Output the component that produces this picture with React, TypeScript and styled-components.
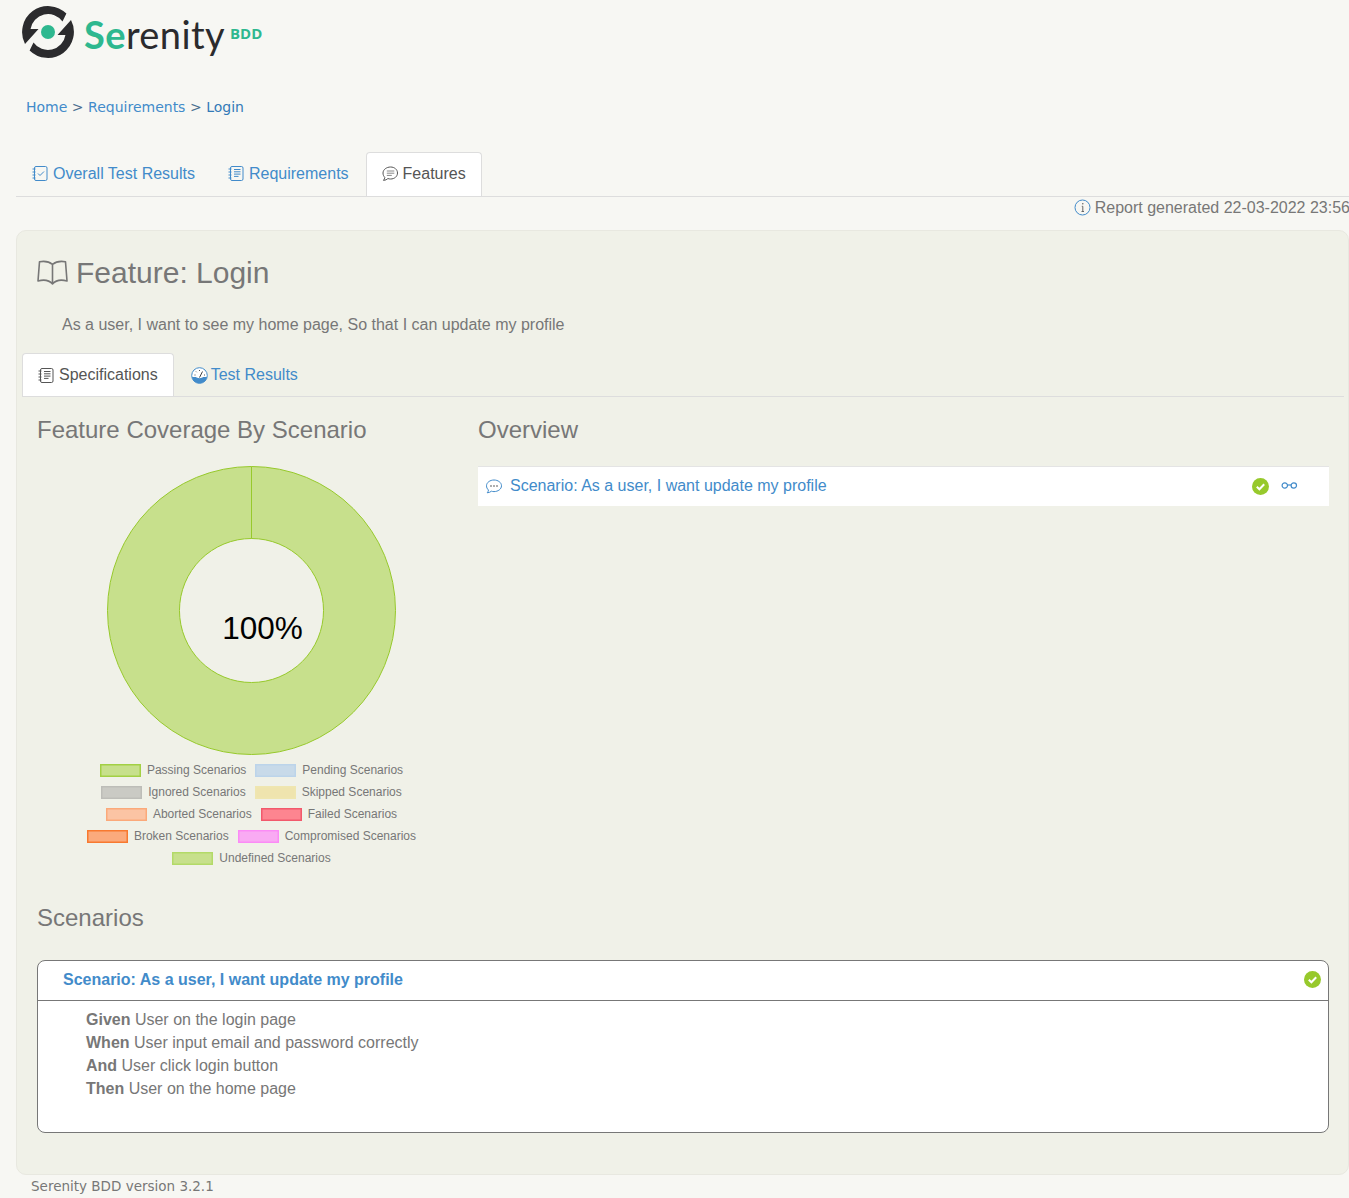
import React from "react";
import styled, { createGlobalStyle } from "styled-components";

const BLUE = "#428bca";
const GREY = "#777";

const GlobalStyle = createGlobalStyle`
  html, body {
    margin: 0;
    padding: 0;
    background: #f7f7f3;
    font-family: "Liberation Sans", Arial, sans-serif;
    font-size: 16px;
    color: ${GREY};
  }
  * { box-sizing: border-box; }
`;

const Page = styled.div`
  width: 1349px;
  height: 1198px;
  overflow: hidden;
`;

const Header = styled.header`
  display: flex;
  align-items: flex-start;
  height: 70px;
  padding: 6px 0 0 22px;
`;

const LogoName = styled.span`
  margin: 7px 0 0 10px;
  font-family: Lato, sans-serif;
  font-size: 38px;
  line-height: 42px;
  letter-spacing: 0.4px;
  color: #2b2b2d;
  b {
    font-weight: 700;
    color: #2eb88f;
  }
`;

const LogoTag = styled.span`
  margin: 18px 0 0 5px;
  font-family: "Open Sans", sans-serif;
  font-weight: 700;
  font-size: 15px;
  line-height: 18px;
  color: #2eb88f;
`;

const Breadcrumbs = styled.nav`
  display: flex;
  gap: 4.5px;
  height: 82px;
  padding: 28px 0 0 26px;
  font-family: "DejaVu Sans", Verdana, sans-serif;
  font-size: 14px;
  line-height: 18px;
  color: #4a6f8f;
`;

const Crumb = styled.a<{ $current?: boolean }>`
  color: ${(p) => (p.$current ? "#337ab7" : BLUE)};
`;

const TabBar = styled.ul<{ $inner?: boolean }>`
  display: flex;
  list-style: none;
  height: ${(p) => (p.$inner ? 44 : 45)}px;
  margin: 0 0 0 ${(p) => (p.$inner ? 0 : 16)}px;
  padding: 0;
  border-bottom: 1px solid #ddd;
`;

const Tab = styled.li<{ $active?: boolean; $gap?: number; $lift?: number }>`
  display: flex;
  align-items: center;
  gap: ${(p) => p.$gap ?? 5}px;
  height: 100%;
  margin-right: 1px;
  padding: 0 15px ${(p) => p.$lift ?? 2}px;
  border: 1px solid ${(p) => (p.$active ? "#ddd" : "transparent")};
  border-bottom: 0;
  border-radius: 4px 4px 0 0;
  background: ${(p) => (p.$active ? "#fff" : "transparent")};
  color: ${(p) => (p.$active ? "#555" : BLUE)};
  font-size: 16px;
  svg {
    flex: none;
  }
`;

const GeneratedLine = styled.div`
  display: flex;
  justify-content: flex-end;
  align-items: center;
  gap: 4px;
  height: 33px;
  margin-right: -1px;
  padding-bottom: 12px;
  white-space: nowrap;
  color: ${GREY};
`;

const Panel = styled.main`
  height: 945px;
  margin-left: 16px;
  padding: 0 4px 0 5px;
  background: #f0f1e8;
  border: 1px solid #e8e8e0;
  border-radius: 10px;
`;

const FeatureTitle = styled.h1`
  display: flex;
  align-items: center;
  gap: 8px;
  height: 41px;
  margin: 21px 0 0 15px;
  font-size: 30px;
  font-weight: 400;
  color: ${GREY};
`;

const Narrative = styled.p`
  height: 20px;
  margin: 22px 0 18px 40px;
  line-height: 20px;
`;

const Columns = styled.section`
  display: grid;
  grid-template-columns: 429px 851px;
  column-gap: 12px;
  padding: 0 0 0 15px;
  height: 500px;
`;

const SectionTitle = styled.h2`
  height: 28px;
  margin: 19px 0 21px;
  font-size: 24px;
  line-height: 28px;
  font-weight: 400;
  color: ${GREY};
`;

const OverviewTitle = styled(SectionTitle)`
  margin-bottom: 22px;
`;

const ScenariosTitle = styled(SectionTitle)`
  margin: 7px 0 28px 15px;
`;

const ChartWrap = styled.div`
  display: flex;
  justify-content: center;
  height: 294px;
`;

const Legend = styled.div`
  display: flex;
  flex-direction: column;
  align-items: center;
`;

const LegendRow = styled.div`
  display: flex;
  gap: 9px;
  height: 22px;
  align-items: center;
`;

const LegendItem = styled.span`
  display: flex;
  align-items: center;
  gap: 6px;
  font-size: 12px;
  white-space: nowrap;
`;

const Swatch = styled.i<{ $fill: string; $line: string }>`
  display: block;
  width: 41px;
  height: 13px;
  background: ${(p) => p.$fill};
  border: 1px solid ${(p) => p.$line};
  box-shadow: inset 0 0 0 0.5px ${(p) => p.$line};
`;

const OverviewRow = styled.div`
  display: flex;
  align-items: center;
  height: 40px;
  padding: 0 31px 1px 8px;
  background: #fff;
  border-top: 1px solid #e4e4e4;
  color: ${BLUE};
`;

const OverviewName = styled.span`
  flex: 1;
  margin-left: 8px;
`;

const GlassesSlot = styled.span`
  display: flex;
  margin: -1px 0 0 12px;
`;

const ScenarioCard = styled.article`
  margin: 0 15px;
  height: 173px;
  background: #fff;
  border: 1px solid ${GREY};
  border-radius: 8px;
`;

const ScenarioHead = styled.div`
  display: flex;
  justify-content: space-between;
  align-items: center;
  height: 40px;
  padding: 0 7px 2px 25px;
  border-bottom: 1px solid ${GREY};
  font-weight: 700;
  color: ${BLUE};
`;

const Steps = styled.div`
  padding: 7px 0 0 48px;
  font-size: 16px;
  line-height: 23px;
`;

const Footer = styled.footer`
  padding: 3px 0 0 31px;
  font-family: "DejaVu Sans", Verdana, sans-serif;
  font-size: 13.5px;
  line-height: 16px;
  color: ${GREY};
`;

const legendRows = [
  [
    ["Passing Scenarios", "#c7e08c", "#a3d044"],
    ["Pending Scenarios", "#c8dae9", "#bcd4ea"],
  ],
  [
    ["Ignored Scenarios", "#cacac4", "#bdbdb8"],
    ["Skipped Scenarios", "#efe4ae", "#efe6b0"],
  ],
  [
    ["Aborted Scenarios", "#fbc4a4", "#fba97a"],
    ["Failed Scenarios", "#fd8590", "#f2596c"],
  ],
  [
    ["Broken Scenarios", "#fbaa7c", "#f8792f"],
    ["Compromised Scenarios", "#f9aaf3", "#fb8bf6"],
  ],
  [["Undefined Scenarios", "#c7e08c", "#b3da68"]],
];

const NotebookIcon = ({ color, check }: { color: string; check?: boolean }) => (
  <svg width="16" height="17" viewBox="0 0 16 17" fill="none" stroke={color} strokeWidth="1">
    <rect x="2.5" y="1.5" width="12.5" height="14" rx="1.5" />
    <path d="M0.5 4h3M0.5 7h3M0.5 10h3M0.5 13h3" strokeDasharray="2 0.5" />
    {check ? (
      <path d="M6 8.5l2 2 4-4" />
    ) : (
      <path d="M6 4.5h6.5M6 6.8h6.5M6 9.1h6.5M6 11.4h4.5" />
    )}
  </svg>
);

const ChatLinesIcon = () => (
  <svg width="16" height="16" viewBox="0 0 16 16" fill="none" stroke="#555" strokeWidth="1">
    <path d="M8.6 1c3.900 0 6.900 2.600 6.900 6s-3 6-6.900 6c-1 0-1.900-.1-2.700-.5-1 1-2.400 1.700-4.400 1.900.7-.9 1.200-2 1.300-3.100C1.600 10.200 1 8.700 1 7c0-3.400 3.600-6 7.600-6z" />
    <path d="M4.800 5h7.500M4.800 7.200h7.500M4.800 9.400h5" stroke="#888" />
  </svg>
);

const ChatDotsIcon = () => (
  <svg width="16" height="15" viewBox="0 0 16 15" fill="none" stroke={BLUE} strokeWidth="1">
    <path d="M8 1c4 0 7.500 2.500 7.500 5.800S12 12.600 8 12.600c-.9 0-1.800-.1-2.600-.4-1 .9-2.500 1.500-4.200 1.600.7-.8 1.200-1.800 1.300-2.800C1.200 9.900.5 8.400.5 6.800.5 3.500 4 1 8 1z" />
    <path d="M4.300 7h1.400M7.300 7h1.400M10.300 7h1.400" strokeWidth="1.400" stroke="#666" />
  </svg>
);

const InfoIcon = () => (
  <svg width="17" height="17" viewBox="0 0 17 17" fill="none" stroke={BLUE}>
    <circle cx="8.500" cy="8.500" r="7.500" />
    <path d="M8.800 7.300v5M7.500 12.500h2.500M7.800 7.300h1" stroke="#666" />
    <circle cx="8.800" cy="4.800" r="0.800" fill="#666" stroke="none" />
  </svg>
);

const BookIcon = () => (
  <svg width="31" height="26" viewBox="0 0 31 26" fill="none" stroke={GREY} strokeWidth="1.600" strokeLinejoin="round">
    <path d="M15.500 4.500C12 1.500 6.500 1 2.500 1.800L1 21c5.500-1.500 11-1 14.500 3 3.500-4 9-4.500 14.500-3L28.500 1.800C24.500 1 19 1.500 15.500 4.500V24" />
  </svg>
);

const GaugeIcon = () => (
  <svg width="17" height="17" viewBox="0 0 17 17">
    <circle cx="8.500" cy="8.500" r="7.800" fill="#fff" stroke={BLUE} />
    <path d="M1 10h4c1 1.500 6 1.500 7 0h4c-.5 3.800-3.500 6.300-7.500 6.300S1.500 13.800 1 10z" fill={BLUE} />
    <path d="M8.500 10.500l3-6" stroke="#444" fill="none" />
    <path d="M3.500 8h1M5 4.500l.7.7M8.500 3v1M13 8h1" stroke="#555" fill="none" />
  </svg>
);

const GlassesIcon = () => (
  <svg width="17" height="9" viewBox="0 0 17 9" fill="none" stroke={BLUE} strokeWidth="1.200">
    <circle cx="3.800" cy="4.500" r="2.700" />
    <circle cx="12.800" cy="4.500" r="2.700" />
    <path d="M6.500 4h3.600" />
  </svg>
);

const CheckBadge = () => (
  <svg width="17" height="17" viewBox="0 0 17 17">
    <circle cx="8.500" cy="8.500" r="8.500" fill="#97c92c" />
    <path d="M4.800 8.800l2.600 2.500 4.800-5" fill="none" stroke="#fff" strokeWidth="2" />
  </svg>
);

const LogoPiece = "M3 38L16.500 23H8.560A17.700 17.700 0 0 1 40.500 15.500L44.400 7.600A26 26 0 0 0 3 38Z";

const LogoMark = () => (
  <svg width="52" height="52" viewBox="0 0 52 52">
    <path d={LogoPiece} fill="#2b2b2d" />
    <path d={LogoPiece} fill="#2b2b2d" transform="rotate(180 26 26)" />
    <circle cx="26" cy="26" r="7" fill="#2eb88f" />
  </svg>
);

const Donut = () => (
  <svg width="290" height="294" viewBox="0 0 290 294">
    <path
      fillRule="evenodd"
      d="M144.500 1.500a144 144 0 1 0 0 288a144 144 0 1 0 0-288zM144.500 73.500a72 72 0 1 1 0 144a72 72 0 1 1 0-144z"
      fill="#c7e08c"
      stroke="#97c92c"
    />
    <path d="M144.500 1.500v72" stroke="#97c92c" />
    <text x="155.500" y="174" textAnchor="middle" fontFamily="Liberation Sans, sans-serif" fontSize="31.500" fill="#000">
      100%
    </text>
  </svg>
);

const App = () => {
  return (
    <Page>
      <GlobalStyle />
      <Header>
        <LogoMark />
        <LogoName>
          <b>Se</b>renity
        </LogoName>
        <LogoTag>BDD</LogoTag>
      </Header>
      <Breadcrumbs>
        <Crumb>Home</Crumb>
        <span>&gt;</span>
        <Crumb>Requirements</Crumb>
        <span>&gt;</span>
        <Crumb $current>Login</Crumb>
      </Breadcrumbs>
      <TabBar>
        <Tab>
          <NotebookIcon color={BLUE} check />
          Overall Test Results
        </Tab>
        <Tab>
          <NotebookIcon color={BLUE} />
          Requirements
        </Tab>
        <Tab $active>
          <ChatLinesIcon />
          Features
        </Tab>
      </TabBar>
      <GeneratedLine>
        <InfoIcon />
        Report generated 22-03-2022 23:56
      </GeneratedLine>
      <Panel>
        <FeatureTitle>
          <BookIcon />
          Feature: Login
        </FeatureTitle>
        <Narrative>As a user, I want to see my home page, So that I can update my profile</Narrative>
        <TabBar $inner>
          <Tab $active $lift={0}>
            <NotebookIcon color="#555" />
            Specifications
          </Tab>
          <Tab $gap={3} $lift={0}>
            <GaugeIcon />
            Test Results
          </Tab>
        </TabBar>
        <Columns>
          <div>
            <SectionTitle>Feature Coverage By Scenario</SectionTitle>
            <ChartWrap>
              <Donut />
            </ChartWrap>
            <Legend>
              {legendRows.map((row) => (
                <LegendRow key={row[0][0]}>
                  {row.map(([label, fill, line]) => (
                    <LegendItem key={label}>
                      <Swatch $fill={fill} $line={line} />
                      {label}
                    </LegendItem>
                  ))}
                </LegendRow>
              ))}
            </Legend>
          </div>
          <div>
            <OverviewTitle>Overview</OverviewTitle>
            <OverviewRow>
              <ChatDotsIcon />
              <OverviewName>Scenario: As a user, I want update my profile</OverviewName>
              <CheckBadge />
              <GlassesSlot>
                <GlassesIcon />
              </GlassesSlot>
            </OverviewRow>
          </div>
        </Columns>
        <ScenariosTitle>Scenarios</ScenariosTitle>
        <ScenarioCard>
          <ScenarioHead>
            Scenario: As a user, I want update my profile
            <CheckBadge />
          </ScenarioHead>
          <Steps>
            <div>
              <b>Given</b> User on the login page
            </div>
            <div>
              <b>When</b> User input email and password correctly
            </div>
            <div>
              <b>And</b> User click login button
            </div>
            <div>
              <b>Then</b> User on the home page
            </div>
          </Steps>
        </ScenarioCard>
      </Panel>
      <Footer>Serenity BDD version 3.2.1</Footer>
    </Page>
  );
};

export default App;
